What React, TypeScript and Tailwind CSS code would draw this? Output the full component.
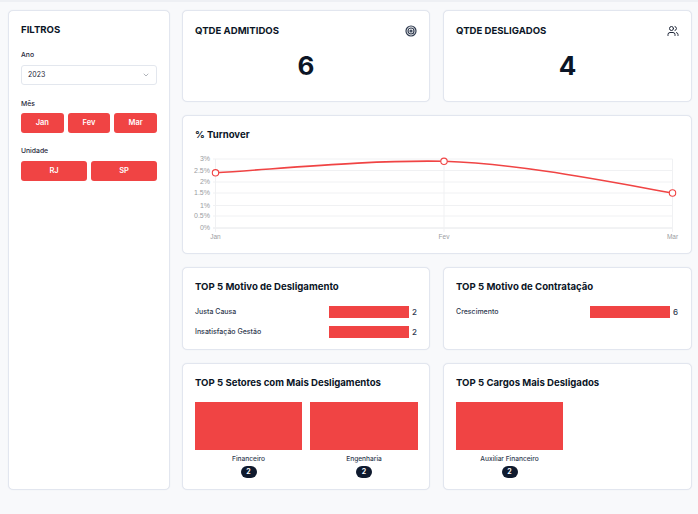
import React from "react";
import { ChevronDown, Target, Users } from "lucide-react";

const font = "font-['Inter',sans-serif]";

const Card = ({ className = "", children }: { className?: string; children: React.ReactNode }) => (
  <div className={`rounded-[5px] border border-[#e2e6ef] bg-white shadow-[0_0_1px_#dfe3ec] ${className}`}>{children}</div>
);

const FilterButton = ({ label }: { label: string }) => (
  <button className="flex h-5 flex-1 items-center justify-center rounded-[3px] bg-[#f04444] text-[7.5px] font-semibold text-white">
    {label}
  </button>
);

const KpiCard = ({ title, value, icon }: { title: string; value: string; icon: React.ReactNode }) => (
  <Card className="h-[92px] px-[12px] pt-[12px]">
    <div className="flex items-start justify-between">
      <span className="text-[9.6px] leading-[16px] font-bold text-[#0b1526]">{title}</span>
      <span className="mt-[2px]">{icon}</span>
    </div>
    <div className="mt-[11px] text-center text-[26px] leading-[32px] font-bold text-[#0b1526]">{value}</div>
  </Card>
);

const yLabels = ["3%", "2.5%", "2%", "1.5%", "1%", "0.5%", "0%"];
const yLines = [159, 170.5, 182, 193, 205.5, 216, 228];

const TurnoverChart = () => (
  <svg width="510" height="111" viewBox="182 142 510 111" className="block">
    {yLines.map((y, i) => (
      <line key={y} x1="213" x2="672.5" y1={y} y2={y} stroke={i === 6 ? "#e4e6e9" : "#f0f1f3"} strokeWidth="1" />
    ))}
    {[215.5, 444, 672.5].map((x) => (
      <line key={x} x1={x} x2={x} y1="159" y2="232" stroke="#f0f1f3" strokeWidth="1" />
    ))}
    {yLabels.map((label, i) => (
      <text key={label} x="210" y={yLines[i] + 2} textAnchor="end" fontSize="7" fill="#9a9ca1" fontFamily="Liberation Sans, sans-serif">
        {label}
      </text>
    ))}
    {[
      ["Jan", 215.5],
      ["Fev", 444],
      ["Mar", 672.5],
    ].map(([label, x]) => (
      <text key={label} x={x} y="239" textAnchor="middle" fontSize="6.5" fill="#9a9ca1" fontFamily="Liberation Sans, sans-serif">
        {label}
      </text>
    ))}
    <path
      d="M215.5 172.8 C 290 168, 370 160, 444 161.3 C 520 164, 600 180, 672.5 193"
      fill="none"
      stroke="#f04444"
      strokeWidth="1.6"
    />
    {[
      [215.5, 172.8],
      [444, 161.3],
      [672.5, 193],
    ].map(([x, y]) => (
      <circle key={x} cx={x} cy={y} r="3.2" fill="#fff" stroke="#f04444" strokeWidth="1.1" />
    ))}
  </svg>
);

const HBar = ({ label, value }: { label: string; value: number }) => (
  <div className="flex h-3 items-center">
    <span className="flex-1 text-[7px] font-medium text-[#2f3a4f]">{label}</span>
    <span className="h-3 w-20 bg-[#f04444]" />
    <span className="w-[9px] pl-[3px] text-[8px] font-medium text-[#2f3a4f]">{value}</span>
  </div>
);

const VBar = ({ label, value }: { label: string; value: number }) => (
  <div className="flex flex-col items-center">
    <div className="h-12 w-full bg-[#f04444]" />
    <span className="mt-[3px] text-[6.6px] leading-[12px] font-medium text-[#2f3a4f]">{label}</span>
    <span className="mt-[1px] flex h-3 w-4 items-center justify-center rounded-full bg-[#0f1a2e] text-[7px] font-bold text-white">
      {value}
    </span>
  </div>
);

export default function App() {
  return (
    <div className={`${font} h-[514px] w-[698px] overflow-hidden border-t-2 border-[#eef0f4] bg-[#f8f9fb]`}>
      <div className="flex gap-[12px] pt-[8px] pr-[6px] pl-[8px]">
        <Card className="h-[480px] w-[162px] px-[12px] pt-[12px]">
          <h2 className="text-[9.6px] leading-[14px] font-bold text-[#0b1526]">FILTROS</h2>

          <label className="mt-[12px] block text-[6.8px] leading-[12px] font-medium text-[#1e2638]">Ano</label>
          <div className="mt-[4px] flex h-5 items-center justify-between rounded-[3px] border border-[#e3e7ee] pr-[6px] pl-[6px] text-[7px] text-[#1e2638]">
            2023
            <ChevronDown size={8} className="text-[#8a8f99]" />
          </div>

          <label className="mt-[13px] block text-[6.8px] leading-[12px] font-medium text-[#1e2638]">Mês</label>
          <div className="mt-[3px] flex gap-1">
            <FilterButton label="Jan" />
            <FilterButton label="Fev" />
            <FilterButton label="Mar" />
          </div>

          <label className="mt-[12px] block text-[6.8px] leading-[12px] font-medium text-[#1e2638]">Unidade</label>
          <div className="mt-[4px] flex gap-1">
            <FilterButton label="RJ" />
            <FilterButton label="SP" />
          </div>
        </Card>

        <div className="grid w-[510px] grid-cols-[248px_249px] gap-[13px]">
          <KpiCard title="QTDE ADMITIDOS" value="6" icon={<Target size={12} strokeWidth={2.4} className="text-[#2f3a4f]" />} />
          <KpiCard title="QTDE DESLIGADOS" value="4" icon={<Users size={12} className="text-[#1e2638]" />} />

          <Card className="col-span-2 h-[139px] overflow-hidden">
            <h3 className="px-[12px] pt-[11px] text-[9.6px] leading-[15px] font-bold text-[#0b1526]">% Turnover</h3>
            <div className="-mx-px">
              <TurnoverChart />
            </div>
          </Card>

          <Card className="h-[83px] pt-[11px] pr-[11px] pl-[12px]">
            <h3 className="text-[9.6px] leading-[16px] font-bold text-[#0b1526]">TOP 5 Motivo de Desligamento</h3>
            <div className="mt-[11px] flex flex-col gap-2">
              <HBar label="Justa Causa" value={2} />
              <HBar label="Insatisfação Gestão" value={2} />
            </div>
          </Card>
          <Card className="h-[83px] px-[12px] pt-[11px]">
            <h3 className="text-[9.6px] leading-[16px] font-bold text-[#0b1526]">TOP 5 Motivo de Contratação</h3>
            <div className="mt-[11px] flex flex-col gap-2">
              <HBar label="Crescimento" value={6} />
            </div>
          </Card>

          <Card className="h-[127px] pt-[11px] pr-[11px] pl-[12px]">
            <h3 className="text-[9.6px] leading-[16px] font-bold text-[#0b1526]">TOP 5 Setores com Mais Desligamentos</h3>
            <div className="mt-[11px] grid grid-cols-[107px_108px] gap-2">
              <VBar label="Financeiro" value={2} />
              <VBar label="Engenharia" value={2} />
            </div>
          </Card>
          <Card className="h-[127px] px-[12px] pt-[11px]">
            <h3 className="text-[9.6px] leading-[16px] font-bold text-[#0b1526]">TOP 5 Cargos Mais Desligados</h3>
            <div className="mt-[11px] grid grid-cols-[107px_108px] gap-2">
              <VBar label="Auxiliar Financeiro" value={2} />
            </div>
          </Card>
        </div>
      </div>
    </div>
  );
}
